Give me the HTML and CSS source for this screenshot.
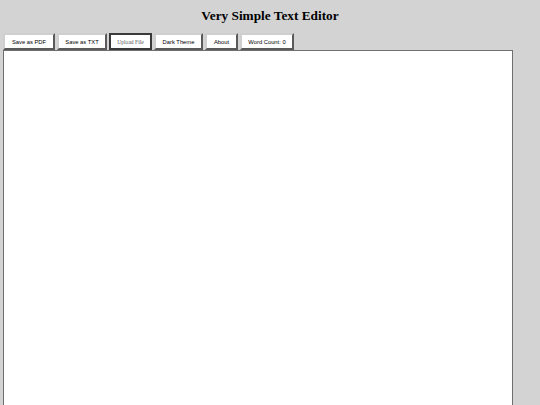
FILE: index.html
```html
<!DOCTYPE html>
<html>
<head>
<meta charset="utf-8">
<title>Very Simple Text Editor</title>
<link rel="stylesheet" href="styles.css">
</head>
<body>
<h1 class="title">Very Simple Text Editor</h1>
<div class="toolbar">
  <button class="btn btn-pdf">Save as PDF</button>
  <button class="btn btn-txt">Save as TXT</button>
  <label class="upload">Upload File</label>
  <button class="btn btn-theme">Dark Theme</button>
  <button class="btn btn-about">About</button>
  <button class="btn btn-count">Word Count: 0</button>
</div>
<textarea class="editor"></textarea>
</body>
</html>
```

FILE: styles.css
```css
html, body {
  margin: 0;
  padding: 0;
  background: #d3d3d3;
  overflow: hidden;
}
body {
  padding: 0 3px;
}
.title {
  font-family: "Liberation Serif", serif;
  font-weight: bold;
  font-size: 13.3px;
  text-align: center;
  margin: 0;
  padding-top: 8px;
  height: 25px;
  line-height: 15px;
  color: #000;
}
.toolbar {
  display: flex;
  gap: 2px;
  height: 17px;
}
.btn, .upload {
  box-sizing: border-box;
  height: 17px;
  background: #fff;
  font-family: "Liberation Sans", sans-serif;
  font-size: 5.8px;
  color: #000;
  padding: 0;
  margin: 0;
  display: flex;
  align-items: center;
  justify-content: center;
  white-space: nowrap;
}
.btn {
  border-width: 2px;
  border-style: solid;
  border-color: #cfcfcf #5a5a5a #5a5a5a #cfcfcf;
}
.btn-pdf { width: 52px; }
.btn-txt { width: 50px; }
.btn-theme { width: 49px; }
.btn-about { width: 33px; }
.btn-count { width: 54px; }
.upload {
  width: 43px;
  border: 2px solid #3a3a3a;
  font-family: "Liberation Serif", serif;
  font-size: 5.6px;
  color: #555;
}
.editor {
  display: block;
  box-sizing: border-box;
  width: 510px;
  height: 400px;
  margin: 0;
  border: 1px solid #6f6f6f;
  background: #fff;
  resize: none;
  padding: 2px;
  outline: none;
}
```
